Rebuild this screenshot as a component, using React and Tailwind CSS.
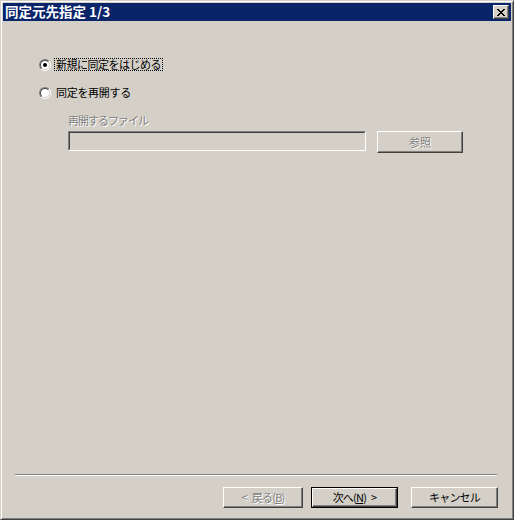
import React from "react";

const font = { fontFamily: '"Noto Sans CJK JP", "Noto Sans", sans-serif' };

function Radio({ checked }) {
  return (
    <div className="w-[12px] h-[12px] rounded-full border border-t-[#808080] border-l-[#808080] border-r-white border-b-white flex">
      <div className="flex-1 rounded-full border border-t-[#404040] border-l-[#404040] border-r-[#d4d0c8] border-b-[#d4d0c8] bg-white flex items-center justify-center">
        {checked && <div className="w-[4px] h-[4px] rounded-full bg-black" />}
      </div>
    </div>
  );
}

function Button({ children, width, isDefault, disabled }) {
  const inner = (
    <div
      className={`h-full flex items-center justify-center border border-t-white border-l-white border-r-[#404040] border-b-[#404040] shadow-[inset_-1px_-1px_0_#808080] text-[11px] tracking-[-0.8px] whitespace-pre ${
        disabled
          ? "text-[#808080] [text-shadow:1px_1px_0_#fff]"
          : "text-black"
      }`}
    >
      {children}
    </div>
  );
  return (
    <div
      className={`h-[21px] shrink-0 ${width} ${
        isDefault ? "border border-black" : ""
      }`}
    >
      {inner}
    </div>
  );
}

export default function App() {
  return (
    <div
      className="w-[514px] h-[520px] bg-[#d4d0c8] border border-t-[#d4d0c8] border-l-[#d4d0c8] border-r-[#404040] border-b-[#404040] shadow-[inset_1px_1px_0_#fff,inset_-1px_-1px_0_#808080] p-[2px] flex flex-col"
      style={font}
    >
      {/* title bar */}
      <div className="h-[18px] bg-[#0a246a] flex items-center justify-between pl-[2px] pr-[2px] shrink-0">
        <span className="text-white font-bold text-[13.5px] leading-none">
          同定元先指定 1/3
        </span>
        <div className="w-[16px] h-[14px] bg-[#d4d0c8] border border-t-white border-l-white border-r-[#404040] border-b-[#404040] shadow-[inset_-1px_-1px_0_#808080] flex items-center justify-center">
          <svg width="8" height="7" viewBox="0 0 8 7" shapeRendering="crispEdges">
            <path
              d="M0 0h2v1h-2zM6 0h2v1h-2zM1 1h2v1h-2zM5 1h2v1h-2zM2 2h4v1h-4zM3 3h2v1h-2zM2 4h4v1h-4zM1 5h2v1h-2zM5 5h2v1h-2zM0 6h2v1h-2zM6 6h2v1h-2z"
              fill="#000"
            />
          </svg>
        </div>
      </div>

      {/* body */}
      <div className="flex-1 flex flex-col">
        <div className="pl-[36px] pt-[37px] flex flex-col">
          <div className="h-[13px] flex items-center">
            <Radio checked />
            <span className="ml-[3px] px-[1px] h-[13px] flex items-center border border-dotted border-black text-[11px] leading-none tracking-[-0.5px] text-black">
              新規に同定をはじめる
            </span>
          </div>
          <div className="h-[13px] flex items-center mt-[15px]">
            <Radio />
            <span className="ml-[5px] text-[11px] leading-none tracking-[-0.3px] text-black">
              同定を再開する
            </span>
          </div>
        </div>

        <div className="pl-[65px] flex flex-col">
          <div className="mt-[15px] h-[12px] text-[11px] leading-[12px] tracking-[-1px] text-[#808080] [text-shadow:1px_1px_0_#fff]">
            再開するファイル
          </div>
          <div className="mt-[5px] flex items-start">
            <div className="w-[298px] h-[20px] border border-t-[#808080] border-l-[#808080] border-r-white border-b-white">
              <div className="h-full border border-t-[#404040] border-l-[#404040] border-r-[#d4d0c8] border-b-[#d4d0c8] bg-[#d4d0c8]" />
            </div>
            <div className="ml-[11px] w-[86px] h-[22px] border border-t-white border-l-white border-r-[#404040] border-b-[#404040] shadow-[inset_-1px_-1px_0_#808080] flex items-center justify-center text-[11px] text-[#808080] [text-shadow:1px_1px_0_#fff]">
              参照
            </div>
          </div>
        </div>

        <div className="flex-1" />

        <div className="ml-[12px] w-[482px] border-t border-t-[#808080] border-b border-b-white" />

        <div className="mt-[11px] mb-[9px] pr-[13px] flex justify-end">
          <Button width="w-[80px]" disabled>
            <span>&lt;</span>
            <span className="ml-[5px]">戻る(</span>
            <span className="underline">B</span>
            <span>)</span>
          </Button>
          <div className="w-[8px]" />
          <Button width="w-[87px]" isDefault>
            <span>次へ(</span>
            <span className="underline">N</span>
            <span>)</span>
            <span className="ml-[5px]">&gt;</span>
          </Button>
          <div className="w-[13px]" />
          <Button width="w-[87px]">キャンセル</Button>
        </div>
      </div>
    </div>
  );
}
